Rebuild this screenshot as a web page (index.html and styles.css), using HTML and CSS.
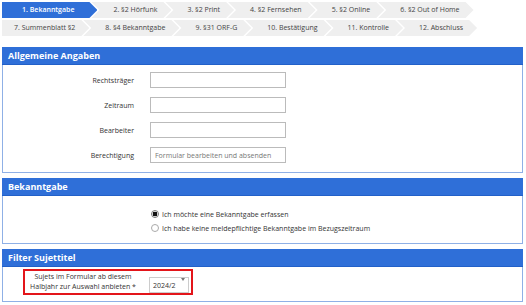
FILE: index.html
```html
<!DOCTYPE html>
<html lang="de">
<head>
    <meta charset="UTF-8">
    <meta name="viewport" content="width=device-width, initial-scale=1.0">
    <title>Bekanntgabe</title>
    <link rel="stylesheet" href="styles.css">
</head>
<body>
    <!-- Schritte -->
    <div class="steps">
        <div class="step-row">
            <span class="step active">1. Bekanntgabe</span>
            <span class="step">2. §2 Hörfunk</span>
            <span class="step">3. §2 Print</span>
            <span class="step">4. §2 Fernsehen</span>
            <span class="step">5. §2 Online</span>
            <span class="step">6. §2 Out of Home</span>
        </div>
        <div class="step-row">
            <span class="step">7. Summenblatt §2</span>
            <span class="step">8. §4 Bekanntgabe</span>
            <span class="step">9. §31 ORF-G</span>
            <span class="step">10. Bestätigung</span>
            <span class="step">11. Kontrolle</span>
            <span class="step">12. Abschluss</span>
        </div>
    </div>

    <!-- Allgemeine Angaben -->
    <div class="panel">
        <div class="panel-head">Allgemeine Angaben</div>
        <div class="panel-body general">
            <div class="field">
                <label for="rechtstraeger">Rechtsträger</label>
                <input type="text" id="rechtstraeger">
            </div>
            <div class="field">
                <label for="zeitraum">Zeitraum</label>
                <input type="text" id="zeitraum">
            </div>
            <div class="field">
                <label for="bearbeiter">Bearbeiter</label>
                <input type="text" id="bearbeiter">
            </div>
            <div class="field">
                <label for="berechtigung">Berechtigung</label>
                <input type="text" id="berechtigung" placeholder="Formular bearbeiten und absenden">
            </div>
        </div>
    </div>

    <!-- Bekanntgabe -->
    <div class="panel">
        <div class="panel-head">Bekanntgabe</div>
        <div class="panel-body choice">
            <label class="radio"><input type="radio" name="art" checked> Ich möchte eine Bekanntgabe erfassen</label>
            <label class="radio"><input type="radio" name="art"> Ich habe keine meldepflichtige Bekanntgabe im Bezugszeitraum</label>
        </div>
    </div>

    <!-- Filter Sujettitel -->
    <div class="panel">
        <div class="panel-head">Filter Sujettitel</div>
        <div class="panel-body filter">
            <div class="filter-box">
                <label for="halbjahr">Sujets im Formular ab diesem<br>Halbjahr zur Auswahl anbieten *</label>
                <span class="select-wrap">
                    <select id="halbjahr">
                        <option>2024/2</option>
                        <option>2024/1</option>
                    </select>
                </span>
            </div>
        </div>
    </div>
</body>
</html>
```

FILE: styles.css
```css
/* Grundlayout */
body {
    margin: 0;
    padding: 2px 3px 0 2px;
    font-family: "Open Sans", "Noto Sans", sans-serif;
    color: #333;
    background: #fff;
}

/* Schritte oben */
.steps {
    display: flex;
    flex-direction: column;
    gap: 2px;
}

.step-row {
    display: flex;
}

.step {
    height: 16px;
    line-height: 16px;
    font-size: 7px;
    padding: 0 14px 0 22px;
    margin-left: -6px;
    background: #efefef;
    color: #444;
    white-space: nowrap;
    clip-path: polygon(0 0, calc(100% - 8px) 0, 100% 50%, calc(100% - 8px) 100%, 0 100%, 8px 50%);
}

.step:first-child {
    margin-left: 0;
    padding-left: 12px;
    clip-path: polygon(0 0, calc(100% - 8px) 0, 100% 50%, calc(100% - 8px) 100%, 0 100%);
}

.step.active {
    background: #2f6fd8;
    color: #fff;
    font-weight: 600;
    padding-left: 20px;
    padding-right: 23px;
}

/* Panels */
.panel {
    border: 1px solid #8fb0e6;
    border-top: none;
    margin-bottom: 5px;
}

.steps + .panel {
    margin-top: 11px;
}

.panel-head {
    background: #2f6fd8;
    border-bottom: 1px solid #2260c8;
    color: #fff;
    font-size: 9px;
    font-weight: 700;
    height: 17px;
    line-height: 17px;
    padding-left: 6px;
    margin: 0 -1px;
}

.panel-body.general {
    padding: 7px 0 9px;
    display: flex;
    flex-direction: column;
    gap: 9px;
}

.field {
    display: flex;
    align-items: center;
}

.field label {
    width: 131px;
    text-align: right;
    font-size: 7px;
    margin-right: 16px;
}

.field input {
    width: 136px;
    height: 16px;
    box-sizing: border-box;
    border: 1px solid #bbb;
    padding: 0 4px;
    font-family: inherit;
    font-size: 7px;
    color: #333;
}

.field input::placeholder {
    color: #777;
}

/* Radio-Auswahl */
.panel-body.choice {
    padding: 11px 0 8px 148px;
    display: flex;
    flex-direction: column;
}

.radio {
    display: flex;
    align-items: center;
    height: 14px;
    font-size: 7px;
}

.radio input {
    appearance: none;
    width: 8px;
    height: 8px;
    margin: 0 3px 0 0;
    border: 1px solid #aaa;
    border-radius: 50%;
    background: #fff;
}

.radio input:checked {
    background: radial-gradient(circle, #111 0 2.2px, #fff 2.6px);
    border-color: #777;
}

/* Filter */
.panel-body.filter {
    padding: 2px 0 6px 20px;
}

.filter-box {
    display: flex;
    align-items: center;
    width: 166px;
    height: 22px;
    border: 2px solid #e3151a;
}

.filter-box label {
    width: 116px;
    flex-shrink: 0;
    text-align: center;
    font-size: 7px;
    line-height: 10px;
    margin-right: 8px;
}

.select-wrap {
    position: relative;
    display: inline-block;
}

.select-wrap select {
    appearance: none;
    width: 40px;
    height: 16px;
    border: 1px solid #ccc;
    background: #fff;
    font-family: inherit;
    font-size: 7px;
    color: #333;
    padding: 0 0 0 3px;
}

.select-wrap::after {
    content: "";
    position: absolute;
    right: 4px;
    top: 7px;
    border-left: 2px solid transparent;
    border-right: 2px solid transparent;
    border-top: 3px solid #777;
}
```
